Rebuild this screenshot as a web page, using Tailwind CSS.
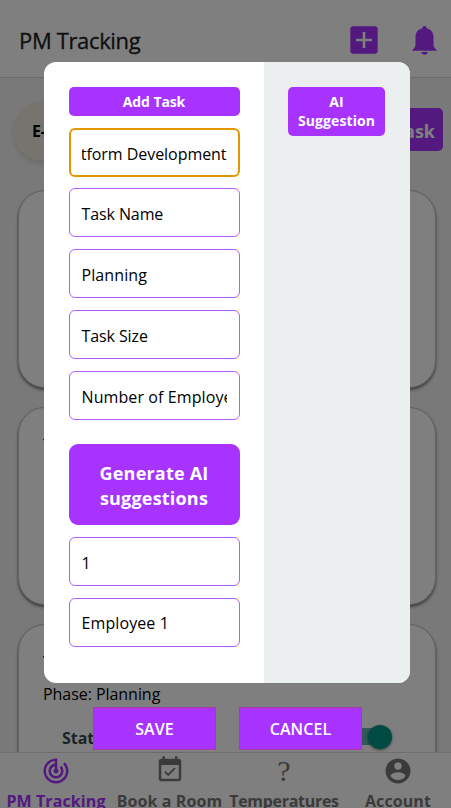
<!DOCTYPE html>
<html lang="en">
<head>
<meta charset="utf-8">
<title>PM Tracking</title>
<script src="https://cdn.jsdelivr.net/npm/@tailwindcss/browser@4"></script>
</head>
<body class="h-[808px] w-[451px] overflow-hidden bg-[#f2f2f2] font-['Open_Sans','Noto_Sans',sans-serif] text-black">
<div class="flex h-[808px] flex-col overflow-hidden">
  <header class="flex h-[78px] shrink-0 items-center justify-between border-b border-[#d8d8d8] bg-white pt-[3px] pr-[14px] pl-[19px]">
    <h1 class="text-[22px] font-medium tracking-[-0.35px] text-[#1c1c1e] [-webkit-text-stroke:0.3px_#1c1c1e]">PM Tracking</h1>
    <div class="flex items-center gap-[34px]">
      <svg class="h-[28px] w-[28px]" viewBox="0 0 28 28"><rect x=".3" y=".3" width="27.4" height="27.4" rx="3" fill="#a833ff"/><path d="M14 6v16M6 14h16" stroke="#fff" stroke-width="2.6"/></svg>
      <svg class="h-[29px] w-[25px]" viewBox="0 0 25 29" fill="#a833ff"><path d="M12.500 0c1.300 0 2.100.9 2.100 2.200 4.300 1 6.900 4.300 6.900 8.800v7.800c0 1.800 1 3.400 3.300 5.400v.5H.2v-.5c2.300-2 3.300-3.600 3.300-5.400V11c0-4.500 2.600-7.800 6.900-8.800C10.400.9 11.200 0 12.500 0z"/><path d="M9.200 26h6.600c-.3 1.800-1.700 2.800-3.300 2.800s-3-1-3.300-2.800z"/></svg>
    </div>
  </header>
  <main class="flex min-h-0 flex-1 flex-col overflow-hidden">
    <div class="flex h-[112px] shrink-0 items-center justify-between pr-[8px] pb-[9px] pl-[13px]">
      <div class="mt-[3px] flex h-[60px] w-[190px] items-center rounded-full bg-[#efe8df] pl-[19px] text-[16px] font-bold tracking-[-0.1px] shadow-md">E-Commerce</div>
      <div class="flex h-[43px] w-[120px] items-center justify-end rounded-[5px] bg-[#a833ff] pt-[4px] pr-[8px] text-[18px] font-bold text-white">Add Task</div>
    </div>
    <div class="flex flex-col gap-[19px] pr-[15px] pl-[18px]">
      <section class="h-[198px] shrink-0 rounded-[27px] border border-[#c0c0c0] bg-white pt-[25px] pl-[24px] text-[16px] tracking-[-0.1px] shadow-[0px_2px_3px_rgba(0,0,0,.5)]">
        <h2 class="h-[32px]">Design</h2><p>Phase: Planning</p>
      </section>
      <section class="h-[198px] shrink-0 rounded-[27px] border border-[#c0c0c0] bg-white pt-[25px] pl-[24px] text-[16px] tracking-[-0.1px] shadow-[0px_2px_3px_rgba(0,0,0,.5)]">
        <h2 class="h-[32px]">Task 2</h2><p>Phase: Planning</p>
      </section>
      <section class="h-[198px] shrink-0 rounded-[27px] border border-[#c0c0c0] bg-white pt-[25px] pl-[24px] text-[16px] tracking-[-0.05px] shadow-[0px_2px_3px_rgba(0,0,0,.5)]">
        <h2 class="h-[32px]">Task 3</h2><p class="h-[43px]">Phase: Planning</p>
        <div class="flex items-center justify-between pr-[43px] pl-[19px]">
          <span class="pt-[1px] text-[16px] font-bold text-[#37474f]">Status</span>
          <span class="mt-[-2px] flex h-[17px] w-[46px] items-center justify-end rounded-full bg-[#62b5ac]"><i class="h-[24px] w-[24px] shrink-0 rounded-full bg-[#009688] shadow-[0_1px_3px_rgba(0,0,0,.5)]"></i></span>
        </div>
      </section>
    </div>
  </main>
  <nav class="flex h-[56px] shrink-0 border-t border-[#d8d8d8] bg-white text-[16px] font-bold text-[#777]">
    <div class="flex w-[112px] flex-col items-center text-[#a833ff]">
      <svg class="mt-[3px] h-[30px] w-[30px] shrink-0" viewBox="0 0 24 24" fill="currentColor"><path d="m19.070 4.930-1.410 1.410C19.100 7.790 20 9.790 20 12c0 4.420-3.580 8-8 8s-8-3.580-8-8c0-4.080 3.050-7.440 7-7.930v2.020C8.160 6.570 6 9.030 6 12c0 3.310 2.690 6 6 6s6-2.690 6-6c0-1.660-.67-3.160-1.760-4.240l-1.410 1.410C15.550 9.900 16 10.900 16 12c0 2.210-1.790 4-4 4s-4-1.790-4-4c0-1.860 1.280-3.410 3-3.860v2.140c-.6.350-1 .98-1 1.720 0 1.100.9 2 2 2s2-.9 2-2c0-.74-.4-1.380-1-1.720V2h-1C6.480 2 2 6.480 2 12s4.480 10 10 10 10-4.480 10-10c0-2.760-1.120-5.260-2.930-7.070z"/></svg>
      <span class="mt-[3px] tracking-[0.1px] whitespace-nowrap">PM Tracking</span>
    </div>
    <div class="flex w-[115px] flex-col items-center">
      <svg class="mt-[2px] h-[30px] w-[30px] shrink-0" viewBox="0 0 24 24" fill="currentColor"><path d="M16.530 11.060 15.470 10l-4.880 4.880-2.120-2.120-1.060 1.060L10.590 17l5.940-5.940zM19 3h-1V1h-2v2H8V1H6v2H5c-1.110 0-1.990.9-1.990 2L3 19c0 1.100.89 2 2 2h14c1.100 0 2-.9 2-2V5c0-1.100-.9-2-2-2zm0 16H5V8h14v11z"/></svg>
      <span class="mt-[4px] tracking-[0.1px] whitespace-nowrap">Book a Room</span>
    </div>
    <div class="flex w-[114px] flex-col items-center">
      <span class="mt-[3px] h-[30px] font-['Liberation_Serif',serif] text-[30px] leading-[30px] font-normal">?</span>
      <span class="mt-[3px] tracking-[-0.3px] whitespace-nowrap">Temperatures</span>
    </div>
    <div class="flex w-[110px] flex-col items-center pl-[4px]">
      <svg class="mt-[3px] h-[30px] w-[30px] shrink-0" viewBox="0 0 24 24" fill="currentColor"><path d="M12 2C6.480 2 2 6.480 2 12s4.480 10 10 10 10-4.480 10-10S17.520 2 12 2zm0 3c1.660 0 3 1.340 3 3s-1.340 3-3 3-3-1.340-3-3 1.340-3 3-3zm0 14.200c-2.500 0-4.710-1.280-6-3.220.03-1.990 4-3.080 6-3.080 1.990 0 5.970 1.090 6 3.080-1.290 1.940-3.500 3.220-6 3.220z"/></svg>
      <span class="mt-[3px] tracking-[0.1px] whitespace-nowrap">Account</span>
    </div>
  </nav>
</div>

<!-- Add task dialog -->
<div class="absolute inset-0 flex flex-col items-center bg-black/50 pt-[62px] pl-[3px]">
  <div class="flex h-[621px] w-[366px] shrink-0 overflow-hidden rounded-[12px] bg-white">
    <div class="flex w-[220px] flex-col gap-[12px] px-[24.500px] pt-[24.500px] text-[16px] tracking-[-0.1px] whitespace-nowrap">
      <div class="flex h-[29.500px] shrink-0 items-center justify-center rounded-[5px] bg-[#a833ff] text-[14px] font-bold text-white">Add Task</div>
      <div class="mb-[-1px] flex h-[49px] shrink-0 items-center rounded-[6px] border-2 border-[#e59700] px-[11px] pt-[2px]"><div class="flex w-full justify-end overflow-hidden tracking-[-0.05px]">E-Commerce Platform Development</div></div>
      <div class="flex h-[49px] shrink-0 items-center rounded-[6px] border border-[#b45cff] px-[12px] pt-[3px]">Task Name</div>
      <div class="flex h-[49px] shrink-0 items-center rounded-[6px] border border-[#b45cff] px-[12px] pt-[3px] tracking-[0.1px]">Planning</div>
      <div class="flex h-[49px] shrink-0 items-center rounded-[6px] border border-[#b45cff] px-[12px] pt-[3px]">Task Size</div>
      <div class="flex h-[49px] shrink-0 items-center rounded-[6px] border border-[#b45cff] px-[12px] pt-[3px]"><div class="w-full overflow-hidden tracking-[0.1px]">Number of Employees</div></div>
      <div class="mt-[12px] flex h-[81px] shrink-0 items-center justify-center rounded-[9px] bg-[#a833ff] pt-[3px] text-center text-[18px] leading-[25px] font-bold tracking-[0.2px] text-white">Generate AI<br>suggestions</div>
      <div class="flex h-[49px] shrink-0 items-center rounded-[6px] border border-[#b45cff] px-[12px] pt-[3px]">1</div>
      <div class="flex h-[49px] shrink-0 items-center rounded-[6px] border border-[#b45cff] px-[12px] pt-[1px] tracking-[0.1px]">Employee 1</div>
    </div>
    <div class="w-[146px] bg-[#ebeff0] pt-[24.500px] pr-[25px] pl-[24px]">
      <div class="flex h-[49px] items-center justify-center rounded-[5px] bg-[#a833ff] text-center text-[14px] leading-[19px] font-bold tracking-[0.1px] text-white">AI<br>Suggestion</div>
    </div>
  </div>
  <div class="mt-[24px] flex gap-[23px] pl-[1px] text-[16px] font-semibold text-white">
    <div class="flex h-[43px] w-[123px] items-center justify-center border border-[#aa3c9d] bg-[#a833ff] pt-[1px] tracking-[0.1px]">SAVE</div>
    <div class="flex h-[43px] w-[123px] items-center justify-center border border-[#aa3c9d] bg-[#a833ff] pt-[1px] tracking-[0.1px]">CANCEL</div>
  </div>
</div>
</body>
</html>
